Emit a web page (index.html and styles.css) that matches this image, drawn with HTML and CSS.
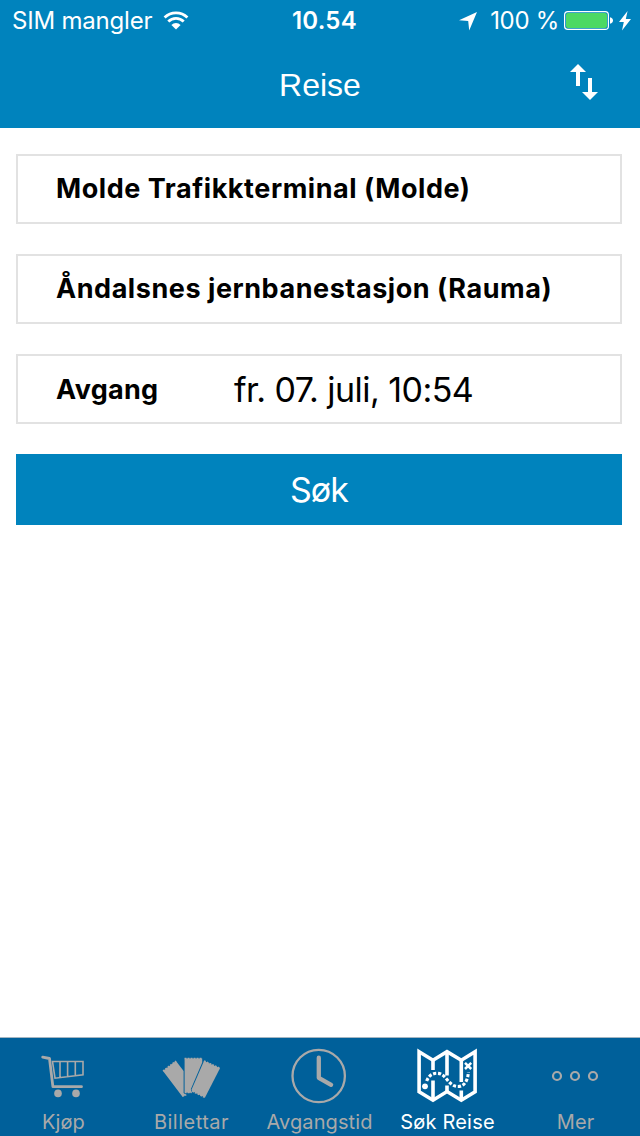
FILE: index.html
```html
<!DOCTYPE html>
<html lang="nn">
  <head>
    <meta charset="utf-8" />
    <meta name="viewport" content="width=device-width, initial-scale=1" />
    <title>Reise</title>
    <link rel="stylesheet" href="styles.css">
  </head>
  <body>
    <div class="app">
      <header class="header">
        <div class="status">
          <div class="status-left">
            <span class="carrier">SIM mangler</span>
            <svg class="wifi" width="26" height="20" viewBox="0 0 26 20">
              <path d="M1.6 6.6a16.2 16.2 0 0 1 22.8 0M5.3 10.5a11 11 0 0 1 15.4 0" fill="none" stroke="#fff" stroke-width="2.8"/>
              <path d="M13 18.5l-4.6-4.6a6.5 6.5 0 0 1 9.2 0z" fill="#fff"/>
            </svg>
          </div>
          <span class="time">10.54</span>
          <div class="status-right">
            <svg width="20" height="20" viewBox="0 0 20 20">
              <path d="M19 1L11.2 19.5 10.2 10 1 9.2z" fill="#fff"/>
            </svg>
            <span class="percent">100 %</span>
            <svg class="battery" width="50" height="20" viewBox="0 0 50 20">
              <rect x=".6" y=".6" width="43.8" height="17.8" rx="3.2" fill="none" stroke="#fff" stroke-width="1.2"/>
              <rect x="2" y="2" width="41" height="15" rx="2" fill="#4cd964"/>
              <path d="M46 6.2c4 .8 4 5.8 0 6.6z" fill="#fff"/>
            </svg>
            <svg class="bolt" width="12" height="20" viewBox="0 0 12 20">
              <path d="M8.6 0L0 11h4.8L3 19.5 12 8H6.8z" fill="#fff"/>
            </svg>
          </div>
        </div>
        <div class="navbar">
          <h1>Reise</h1>
          <button class="swap" aria-label="Byt retning">
            <svg width="28" height="36" viewBox="0 0 28 36">
              <path d="M8 0l8 8h-6v14H6V8H0zM18 14h4v14h6l-8 8-8-8h6z" fill="#fff"/>
            </svg>
          </button>
        </div>
      </header>

      <main class="search">
        <div class="field">Molde Trafikkterminal (Molde)</div>
        <div class="field">Åndalsnes jernbanestasjon (Rauma)</div>
        <div class="field departure">
          <span class="label">Avgang</span>
          <span class="date">fr. 07. juli, 10:54</span>
        </div>
        <button class="submit">Søk</button>
      </main>

      <nav class="tabs">
        <a class="tab">
          <svg class="icon" viewBox="0 0 64 64">
            <path d="M10.7 13.2l6.8 1.3 3.4 28.2H49.5" fill="none" stroke="currentColor" stroke-width="2.8" stroke-linecap="round" stroke-linejoin="round"/>
            <path d="M20.5 17.5H51v13.2l-28 3.5zM28 17.5v15.8M35.6 17.5v15M43.3 17.5v14" fill="none" stroke="currentColor" stroke-width="1.6"/>
            <circle cx="26" cy="49.4" r="3.8" fill="currentColor"/>
            <circle cx="44" cy="49.4" r="3.8" fill="currentColor"/>
          </svg>
          <span class="name">Kjøp</span>
        </a>
        <a class="tab">
          <svg class="icon" viewBox="0 0 64 64">
            <g fill="currentColor">
              <path d="M3 27L16 17l7.6 10v22l2.7 2.2-4 1.4z"/>
              <path d="M24.6 14.6h17.6v4L30.8 45.3l1.2 3.4h-3l-4.4-.4z"/>
              <path d="M44 17l16 7.2-15 29.4L32 47l-.4-1.4z"/>
            </g>
            <!-- perforated edges -->
            <path d="M3 27L16 17M24.6 14.6h17.6M44 17l16 7.2M32.2 47.2l12.6 6.2M24.7 48.5h6.8M22.3 52.2l4-1.5" fill="none" stroke="currentColor" stroke-width="1.5" stroke-dasharray="1.9 1.1"/>
          </svg>
          <span class="name tickets">Billettar</span>
        </a>
        <a class="tab">
          <svg class="icon" viewBox="0 0 64 64">
            <circle cx="30.7" cy="32" r="26.2" fill="none" stroke="currentColor" stroke-width="2.3"/>
            <path d="M30.8 13.7v20.1l12.3 7" fill="none" stroke="currentColor" stroke-width="4.3" stroke-linecap="round" stroke-linejoin="round"/>
          </svg>
          <span class="name">Avgangstid</span>
        </a>
        <a class="tab active">
          <svg class="icon" viewBox="0 0 64 64">
            <g fill="none" stroke="currentColor" stroke-width="3.6">
              <path d="M3.1 7.8L17 16.2l14-8.6 14.3 8.6 13.8-8.4v40L45.3 56.2 31 47.5l-14 8.7-13.9-8.4z" stroke-linejoin="miter"/>
              <path d="M17 15v11M17 36.5v20M31 7v24.5M31 41.5v7M45.3 15v23M45.3 46.5v10"/>
              <path d="M49 18.8l6.2 6.2M55.2 18.8L49 25" stroke-width="2.5"/>
              <path d="M10.7 37C12.5 31.8 16.5 29.3 21 29.3c9.5 0 11 13.2 21 13.2 6.5 0 9.8-6 10.4-14.5" stroke-width="3.1" stroke-dasharray="3.2 1.7"/>
            </g>
            <circle cx="9" cy="42.3" r="2.9" fill="currentColor"/>
          </svg>
          <span class="name journey">Søk Reise</span>
        </a>
        <a class="tab">
          <svg class="icon" viewBox="0 0 64 64">
            <g fill="none" stroke="currentColor" stroke-width="2.2">
              <circle cx="13" cy="32" r="4"/>
              <circle cx="31" cy="32" r="4"/>
              <circle cx="49" cy="32" r="4"/>
            </g>
          </svg>
          <span class="name">Mer</span>
        </a>
      </nav>
    </div>
  </body>
</html>
```
FILE: styles.css
```css
* {
  box-sizing: border-box;
}

body {
  margin: 0;
  background-color: #fff;
  color: #000;
  font-family: Inter, "Liberation Sans", sans-serif;
}

button {
  border: 0;
  padding: 0;
  color: #fff;
  background-color: #0083bd;
  font-family: inherit;
}

svg {
  display: block;
  flex: none;
}

.app {
  display: flex;
  flex-direction: column;
  height: 1136px;
}

/* Status bar and title */
.header {
  height: 128px;
  color: #fff;
  background-color: #0083bd;
}

.status {
  display: grid;
  grid-template-columns: 280px 88px 1fr;
  align-items: center;
  height: 40px;
  padding: 2px 9px 0 12px;
  font-size: 24px;
  line-height: 38px;
  white-space: nowrap;
}

.status-left,
.status-right {
  display: flex;
  align-items: center;
}

.status-right {
  justify-content: flex-end;
}

.carrier {
  width: 151px;
  letter-spacing: -0.2px;
}

.time {
  font-weight: 600;
  letter-spacing: 0.2px;
}

.percent {
  margin: 0 5px 0 12px;
  letter-spacing: -0.3px;
}

.bolt {
  margin-left: 5px;
}

.navbar {
  display: grid;
  grid-template-columns: 70px 1fr 70px;
  align-items: center;
  height: 88px;
}

.navbar h1 {
  grid-column: 2;
  margin: 0;
  padding-top: 2px;
  font-family: "Liberation Sans", sans-serif;
  font-size: 32px;
  font-weight: normal;
  text-align: center;
}

.swap {
  height: 40px;
  padding-bottom: 4px;
}

/* Search form */
.search {
  display: flex;
  flex: 1;
  flex-direction: column;
  gap: 30px;
  padding: 26px 18px 0 16px;
}

.field {
  display: flex;
  align-items: center;
  height: 70px;
  padding: 0 0 2px 38px;
  border: 2px solid #e2e2e2;
  font-size: 27px;
  font-weight: 700;
  letter-spacing: 0.55px;
  white-space: nowrap;
}

.departure {
  padding-bottom: 0;
  letter-spacing: 0.3px;
}

.departure .label {
  width: 178px;
}

.departure .date {
  font-size: 34px;
  font-weight: 400;
  letter-spacing: -0.55px;
}

.submit {
  height: 71px;
  padding-bottom: 1px;
  font-size: 34px;
  letter-spacing: -0.9px;
}

/* Tab bar */
.tabs {
  display: grid;
  grid-template-columns: repeat(5, 128px);
  height: 99px;
  border-top: 1px solid #a5b6c2;
  background-color: #00609a;
}

.tab {
  display: flex;
  flex-direction: column;
  align-items: center;
  padding-top: 6px;
  color: #a9a9a9;
  font-size: 20px;
  line-height: 28px;
}

.tab.active {
  color: #fff;
}

.icon {
  width: 64px;
  height: 64px;
}

.name {
  margin-right: 1px;
  letter-spacing: 0.1px;
}

.tickets {
  letter-spacing: 0.5px;
}

.journey {
  letter-spacing: 0.2px;
}
```
